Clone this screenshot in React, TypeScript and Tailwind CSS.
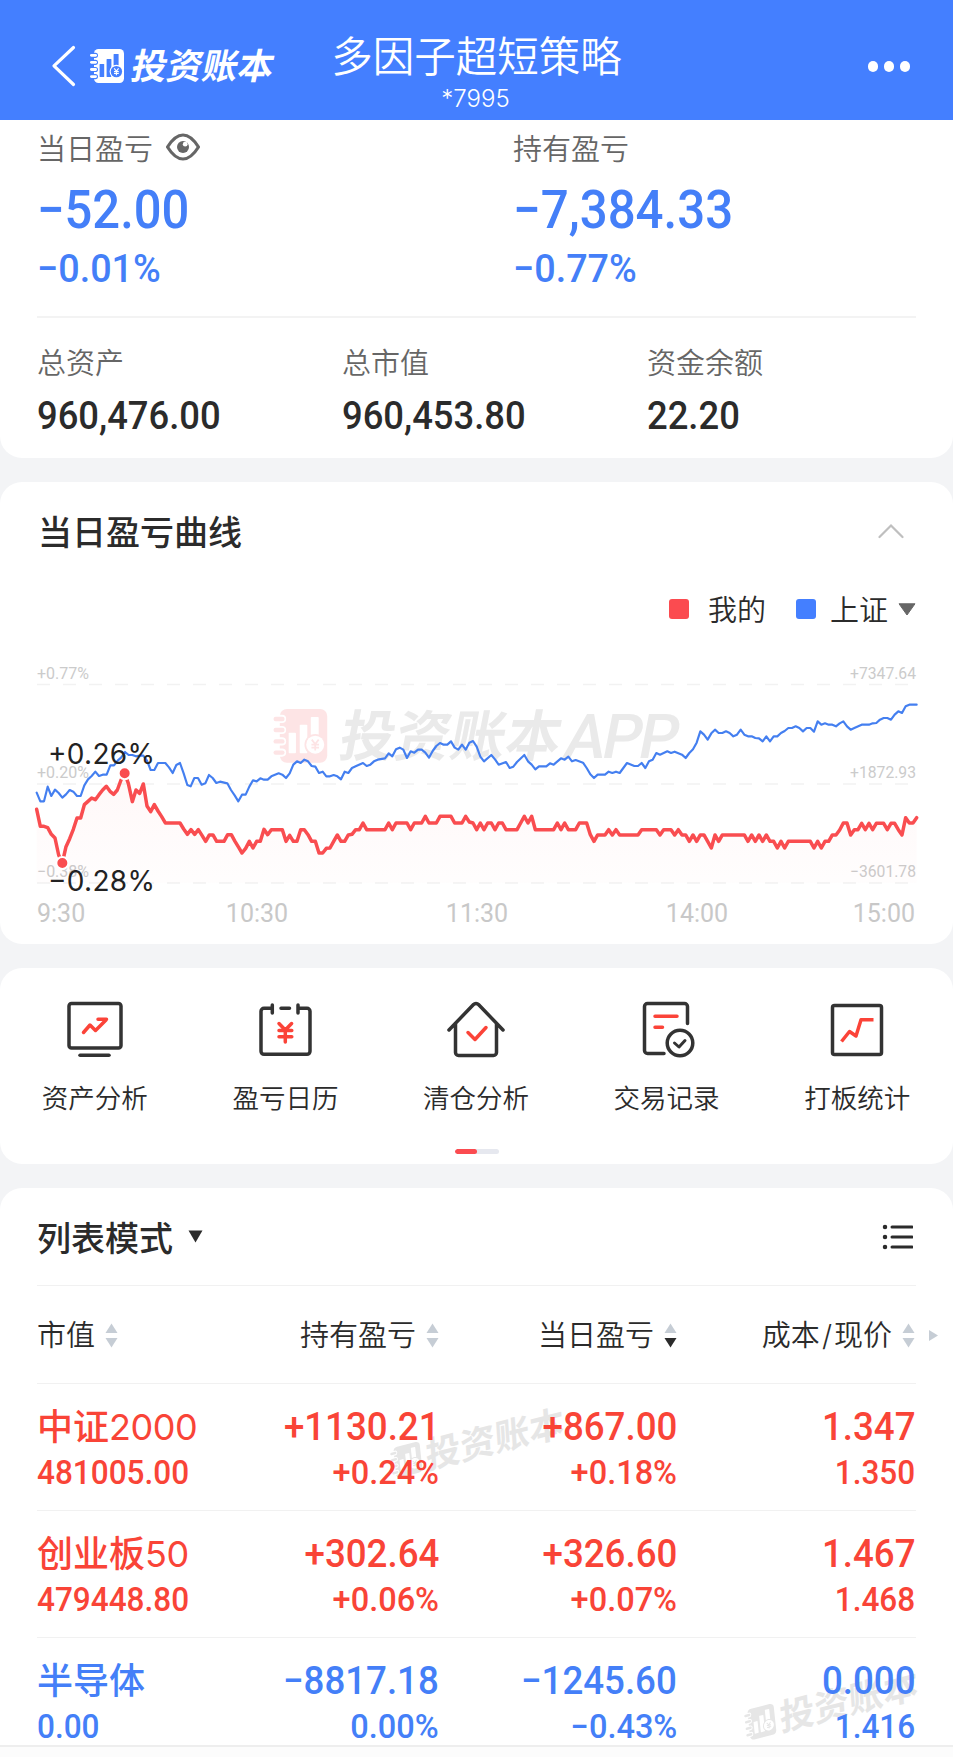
import type { ReactNode } from "react";

type Tone = "up" | "down";

type Holding = {
  name: string;
  code?: string;
  tone: Tone;
  marketValue: string;
  held: [string, string];
  today: [string, string];
  price: [string, string];
};

const TONE: Record<Tone, string> = {
  up: "text-[#f94437]",
  down: "text-[#447ff8]",
};

const HOLDINGS: Holding[] = [
  {
    name: "中证",
    code: "2000",
    tone: "up",
    marketValue: "481005.00",
    held: ["+1130.21", "+0.24%"],
    today: ["+867.00", "+0.18%"],
    price: ["1.347", "1.350"],
  },
  {
    name: "创业板",
    code: "50",
    tone: "up",
    marketValue: "479448.80",
    held: ["+302.64", "+0.06%"],
    today: ["+326.60", "+0.07%"],
    price: ["1.467", "1.468"],
  },
  {
    name: "半导体",
    tone: "down",
    marketValue: "0.00",
    held: ["−8817.18", "0.00%"],
    today: ["−1245.60", "−0.43%"],
    price: ["0.000", "1.416"],
  },
];

// Both series are in thirds of a pixel, one minute = 11 units on x.
const INDEX_LINE =
  "110,458 121,484 132,484 143,440 154,468 165,449 176,459 187,473 198,463 209,450 220,455 231,468 242,468 253,436 264,418 275,408 286,395 297,408 308,404 320,404 331,376 342,376 353,362 364,352 375,336 386,345 397,345 408,349 419,347 430,347 441,362 452,390 463,390 474,369 496,369 507,382 518,399 529,375 540,369 551,400 562,435 572,439 583,414 594,414 605,434 616,430 627,405 638,414 649,429 660,425 682,430 693,450 704,466 715,484 726,464 737,464 748,440 759,421 770,424 781,415 792,419 803,419 814,409 836,400 847,404 858,414 869,400 880,374 891,364 902,369 913,359 924,364 935,378 946,380 957,399 968,395 979,409 990,409 1001,405 1012,409 1023,418 1034,395 1045,399 1056,384 1067,379 1089,369 1100,378 1111,374 1122,364 1133,359 1155,355 1166,340 1177,349 1188,328 1199,323 1210,329 1221,354 1232,334 1243,338 1254,329 1265,329 1276,338 1287,353 1298,333 1309,318 1320,309 1331,314 1342,314 1353,304 1364,323 1375,329 1386,314 1397,329 1408,308 1419,303 1430,320 1441,350 1452,364 1474,345 1485,358 1496,374 1518,366 1529,384 1540,380 1551,366 1573,345 1584,364 1595,374 1606,388 1617,379 1639,379 1650,370 1661,374 1683,355 1694,359 1705,350 1716,364 1727,360 1749,368 1760,384 1771,403 1782,414 1793,404 1815,404 1826,395 1837,399 1848,395 1859,399 1881,369 1903,378 1914,378 1925,369 1936,384 1947,364 1958,359 1969,339 1980,344 2002,334 2013,339 2024,335 2046,344 2057,354 2068,339 2079,328 2090,308 2101,274 2112,284 2123,299 2134,280 2145,269 2156,279 2167,279 2178,274 2189,279 2200,289 2211,284 2222,269 2233,284 2244,289 2255,289 2266,294 2277,295 2288,304 2299,289 2310,304 2321,289 2332,289 2343,279 2354,273 2365,264 2376,264 2387,259 2398,264 2409,274 2420,264 2431,264 2442,275 2453,244 2464,254 2475,250 2486,254 2497,254 2508,259 2519,250 2530,244 2541,259 2552,269 2563,264 2585,254 2607,254 2618,250 2629,249 2640,239 2651,234 2662,234 2673,239 2684,224 2695,214 2706,219 2717,199 2728,194 2750,194";

const MY_LINE =
  "110,508 121,559 132,559 143,563 154,583 165,594 176,645 187,669 198,620 209,596 220,568 231,534 242,534 253,494 264,484 275,474 286,479 297,464 308,450 319,439 330,454 341,463 352,450 363,420 374,400 385,430 397,485 408,450 419,460 430,432 441,498 452,515 463,494 474,513 485,530 496,549 540,549 551,567 562,583 573,569 584,583 595,569 606,586 617,604 628,585 639,585 650,604 672,604 683,584 694,584 705,604 716,622 726,639 737,625 748,604 759,624 770,604 781,604 792,568 803,584 814,569 847,569 858,604 869,586 880,604 891,604 902,569 913,569 924,584 935,604 946,604 957,639 968,639 979,625 990,624 1001,604 1012,585 1023,604 1034,604 1045,585 1056,583 1067,569 1078,569 1089,549 1100,569 1155,569 1166,549 1177,569 1188,549 1221,549 1232,569 1243,549 1265,549 1276,529 1287,549 1309,549 1320,529 1353,529 1364,549 1386,549 1397,529 1408,546 1419,549 1430,569 1441,549 1452,569 1463,549 1474,549 1485,569 1496,549 1507,549 1518,569 1551,569 1562,549 1573,529 1584,549 1595,529 1606,569 1661,569 1672,549 1683,569 1694,549 1705,569 1727,569 1738,549 1760,549 1771,584 1782,604 1793,585 1815,585 1826,569 1837,585 1848,569 1859,585 1914,585 1925,569 1969,569 1980,585 1991,569 2013,569 2024,585 2035,569 2046,585 2057,585 2068,604 2079,585 2090,604 2101,585 2112,585 2123,604 2134,624 2145,585 2156,604 2167,585 2233,585 2244,604 2255,585 2266,604 2277,585 2288,604 2299,585 2310,604 2321,604 2332,624 2343,604 2354,624 2365,604 2431,604 2442,624 2453,604 2464,624 2475,604 2486,604 2497,585 2508,585 2519,570 2530,549 2541,549 2552,585 2563,569 2574,569 2585,550 2596,569 2607,550 2618,569 2629,550 2651,550 2662,569 2673,550 2684,550 2695,569 2706,585 2717,533 2728,549 2739,549 2750,533";

/** Narrowed Roboto, close to a DIN figure. */
function Num({ children, right = false, className = "" }: { children: ReactNode; right?: boolean; className?: string }) {
  return (
    <span
      className={[
        "inline-block whitespace-nowrap font-['Roboto'] font-medium leading-none",
        right ? "origin-right" : "origin-left",
        className,
      ].join(" ")}
    >
      {children}
    </span>
  );
}

/** Spiral notebook with bars and a coin. `hole` is the color behind the mark. */
function BookMark({ color, hole }: { color: string; hole: string }) {
  return (
    <g>
      <rect x="4" y="0" width="30" height="34" rx="4.5" fill={color} />
      {[6.3, 13.3, 20.5, 27.6].map((y) => (
        <g key={y}>
          <rect x="-1" y={y - 2.6} width="9" height="5.2" rx="2.6" fill={hole} />
          <rect x="0" y={y - 1.4} width="7" height="2.8" rx="1.4" fill={color} />
        </g>
      ))}
      <rect x="9.6" y="15" width="4.6" height="13" rx=".5" fill={hole} />
      <rect x="16.6" y="10" width="4.8" height="18" rx=".5" fill={hole} />
      <rect x="23.6" y="5" width="5" height="12" rx=".5" fill={hole} />
      <circle cx="26.4" cy="22.6" r="6.8" fill={color} />
      <circle cx="26.4" cy="22.6" r="5.7" fill={hole} />
      <path d="M24.2 19.4l2.2 2.8 2.2-2.8M26.4 22.2v4M24 22.6h4.8M24 24.5h4.8" fill="none" stroke={color} strokeWidth="1.1" />
    </g>
  );
}

function Sorter({ active = false }: { active?: boolean }) {
  return (
    <svg className="w-[13px] h-[25px] flex-none" viewBox="0 0 13 25">
      <path d="M6.5 0.5L12.5 10H.5z" fill="#c6cdd5" />
      <path d="M6.5 24.5L12.5 15H.5z" fill={active ? "#2b2b2b" : "#c6cdd5"} />
    </svg>
  );
}

function TableWatermark({ className }: { className: string }) {
  return (
    <svg className={`absolute w-[190px] h-[80px] overflow-visible ${className}`} viewBox="0 0 190 80">
      <g transform="translate(6 44) rotate(-14)">
        <g transform="translate(2 -1) skewX(-8) scale(.9)">
          <BookMark color="#e6e6e6" hole="#ffffff" />
        </g>
        <text x="38" y="28" transform="skewX(-10)" fontSize="35.5" fontWeight="700" fill="#e6e6e6" fontFamily="'Noto Sans CJK SC', sans-serif">
          投资账本
        </text>
      </g>
    </svg>
  );
}

function Header() {
  return (
    <header className="relative h-[120px] bg-[#447fff] text-white">
      <div className="absolute left-[50px] top-[44px] flex items-center">
        <svg className="w-[28px] h-[43px]" viewBox="0 0 28 43">
          <path d="M23.5 3.5L4 21.8l19.5 18.7" fill="none" stroke="#fff" strokeWidth="3.2" strokeLinecap="round" strokeLinejoin="round" />
        </svg>
        <svg className="ml-[12px] w-[190px] h-[43px] overflow-visible" viewBox="0 0 190 43">
          <g transform="translate(0 5)">
            <BookMark color="#ffffff" hole="#447fff" />
          </g>
          <text x="47" y="35" transform="skewX(-12)" fontSize="35.5" fontWeight="700" fill="#fff" fontFamily="'Noto Sans CJK SC', sans-serif">
            投资账本
          </text>
        </svg>
      </div>
      <div className="flex flex-col items-center pt-[34px] font-[350]">
        <h1 className="text-[41.5px] leading-[46px]">多因子超短策略</h1>
        <p className="mt-[7px] mr-[2px] text-[24px] leading-[24px] font-light">*7995</p>
      </div>
      <div className="absolute right-[43px] top-[61px] flex gap-[5.5px]">
        <i className="size-[10.5px] rounded-full bg-white" />
        <i className="size-[10.5px] rounded-full bg-white" />
        <i className="size-[10.5px] rounded-full bg-white" />
      </div>
    </header>
  );
}

function Summary() {
  const totals = [
    ["总资产", "960,476.00"],
    ["总市值", "960,453.80"],
    ["资金余额", "22.20"],
  ];
  return (
    <section className="h-[338px] rounded-b-[22px] bg-white px-[37px] pt-[9px]">
      <div className="grid grid-cols-[476px_1fr] text-[#447ff8]">
        <div>
          <div className="flex h-10 items-center gap-[12px] text-[29px] leading-none text-[#666]">
            <span>当日盈亏</span>
            <svg className="mb-[4px] w-[36px] h-[28px]" viewBox="0 0 36 28">
              <path d="M2.5 14Q10 2 18 2t15.500 12Q26 26 18 26T2.500 14z" fill="none" stroke="#666" strokeWidth="3.200" strokeLinejoin="round" />
              <circle cx="18" cy="14" r="6" fill="#666" />
              <circle cx="20.200" cy="11.200" r="2.400" fill="#fff" />
            </svg>
          </div>
          <div className="flex h-[82px] items-center">
            <Num className="text-[53.5px] scale-x-[.915]">−52.00</Num>
          </div>
          <div className="flex h-9 items-center">
            <Num className="text-[39.5px] scale-x-[.955]">−0.01%</Num>
          </div>
        </div>
        <div>
          <div className="flex h-10 items-center text-[29px] leading-none text-[#666]">持有盈亏</div>
          <div className="flex h-[82px] items-center">
            <Num className="text-[53.5px] scale-x-[.92]">−7,384.33</Num>
          </div>
          <div className="flex h-9 items-center">
            <Num className="text-[39.5px] scale-x-[.955]">−0.77%</Num>
          </div>
        </div>
      </div>
      <div className="mt-[29px] h-0.5 bg-[#f3f3f3]" />
      <div className="mt-[25px] grid grid-cols-[305px_305px_1fr]">
        {totals.map(([label, value]) => (
          <div key={label}>
            <div className="flex h-10 items-center text-[29px] leading-none text-[#666]">{label}</div>
            <div className="flex h-[66px] items-center text-[#2b2b2b]">
              <Num className="text-[38.5px] scale-x-[.945]">{value}</Num>
            </div>
          </div>
        ))}
      </div>
    </section>
  );
}

function Chart() {
  const scale = [
    { y: 44.5, left: "+0.77%", right: "+7347.64" },
    { y: 144, left: "+0.20%", right: "+1872.93" },
    { y: 243, left: "−0.38%", right: "−3601.78" },
  ];
  return (
    <svg className="mt-[5px] block h-[304px] w-[953px] font-normal" viewBox="0 0 953 304" fontFamily="Roboto, sans-serif">
      <defs>
        <linearGradient id="fade" x1="0" y1="0" x2="0" y2="1">
          <stop offset="0" stopColor="#fb4b50" stopOpacity=".04" />
          <stop offset="1" stopColor="#fb4b50" stopOpacity=".01" />
        </linearGradient>
      </defs>

      <g transform="translate(273.500 69) scale(1.580)">
        <BookMark color="#fde4e5" hole="#ffffff" />
      </g>
      <g transform="translate(337 116) skewX(-11)" fill="#eaeaea">
        <text fontSize="55" fontWeight="700" fontFamily="'Noto Sans CJK SC', sans-serif" textLength="221">
          投资账本
        </text>
        <text x="225" y="2" fontSize="62" fontWeight="500" fontFamily="Roboto" textLength="114">
          APP
        </text>
      </g>

      {scale.map((s) => (
        <g key={s.y} fontSize="16.500" fill="#cbcbcb">
          <line x1="37" x2="916" y1={s.y} y2={s.y} stroke="#f2f2f2" strokeWidth="1.500" strokeDasharray="13 13" />
          <text x="37" y={s.y - 6} textLength="52" lengthAdjust="spacingAndGlyphs">{s.left}</text>
          <text x="850" y={s.y - 6} textLength="66" lengthAdjust="spacingAndGlyphs">{s.right}</text>
        </g>
      ))}

      <g transform="scale(.33333)" fill="none" strokeLinejoin="round" strokeLinecap="round">
        <polygon points={`${MY_LINE} 2750,729 110,729`} fill="url(#fade)" />
        <polyline points={INDEX_LINE} stroke="#447ff0" strokeWidth="6.500" />
        <polyline points={MY_LINE} stroke="#f94d50" strokeWidth="10.500" />
        <circle cx="374" cy="400" r="18" fill="#f94d50" stroke="#fff" strokeWidth="6" />
        <circle cx="187" cy="669" r="18" fill="#f94d50" stroke="#fff" strokeWidth="6" />
      </g>

      <g fontSize="28" fill="#222" fontFamily="Inter, sans-serif">
        <text x="48" y="124" textLength="107">+0.26%</text>
        <text x="48" y="250.500" textLength="107">−0.28%</text>
      </g>

      <g fontSize="25" fill="#c8c8c8">
        <text x="37" y="282">9:30</text>
        <text x="257" y="282" textAnchor="middle">10:30</text>
        <text x="477" y="282" textAnchor="middle">11:30</text>
        <text x="697" y="282" textAnchor="middle">14:00</text>
        <text x="915" y="282" textAnchor="end">15:00</text>
      </g>
    </svg>
  );
}

function CurveCard() {
  return (
    <section className="mt-6 h-[462px] overflow-hidden rounded-[22px] bg-white pt-[25px]">
      <div className="flex h-[52px] items-center justify-between pl-[38px] pr-[49px]">
        <h2 className="text-[34px] leading-none font-medium">当日盈亏曲线</h2>
        <svg className="mb-[4px] w-[26px] h-[16px]" viewBox="0 0 26 16">
          <path d="M1.500 14L13 2.500 24.500 14" fill="none" stroke="#bfbfbf" strokeWidth="2.200" strokeLinecap="round" />
        </svg>
      </div>
      <div className="mt-[24px] flex h-[52px] items-center justify-end pr-[37px] text-[29px] leading-none">
        <i className="size-[20px] rounded-[3px] bg-[#fb4b50]" />
        <span className="ml-[19px] pt-[2px]">我的</span>
        <i className="ml-[30px] size-[20px] rounded-[3px] bg-[#447fff]" />
        <span className="ml-[14px] pt-[2px]">上证</span>
        <svg className="ml-[10px] w-[18px] h-[13px]" viewBox="0 0 18 13">
          <path d="M1 .8h16L9 12z" fill="#666" stroke="#666" strokeLinejoin="round" />
        </svg>
      </div>
      <Chart />
    </section>
  );
}

const SHORTCUTS: { label: string; icon: ReactNode }[] = [
  {
    label: "资产分析",
    icon: (
      <>
        <rect x="6" y="5.500" width="52" height="44.500" rx="2.500" />
        <path d="M17 57.300h29" />
        <path stroke="#fb4338" d="M20.500 34.500l6.500-7.500 5.500 5.500L43 22M35 21.300h8.500" />
      </>
    ),
  },
  {
    label: "盈亏日历",
    icon: (
      <>
        <path d="M19 10.300h-8a3 3 0 0 0-3 3v40a3 3 0 0 0 3 3h43a3 3 0 0 0 3-3v-40a3 3 0 0 0-3-3h-9M19.300 7v8M45 7v8M28 10.300h8.500" />
        <path stroke="#fb4338" d="M26 25.500l6.300 6.500 6.300-6.500M32.300 32v12M26 32.500h12.800M26 38.700h12.800" />
      </>
    ),
  },
  {
    label: "清仓分析",
    icon: (
      <>
        <path d="M5 32L29.500 6.500a3.500 3.500 0 0 1 5 0L59 32M11.500 26v28.500a3 3 0 0 0 3 3h35a3 3 0 0 0 3-3V26" />
        <path stroke="#fb4338" d="M24 34.500l7 7L42 29.500" />
      </>
    ),
  },
  {
    label: "交易记录",
    icon: (
      <>
        <path d="M52.500 25.500v-17a3 3 0 0 0-3-3H12.500a3 3 0 0 0-3 3v44a3 3 0 0 0 3 3H29" />
        <circle cx="45" cy="45" r="12.800" />
        <path strokeWidth="3" d="M39.500 45l4.500 4 6-6.500" />
        <path stroke="#fb4338" d="M20 18.200h22M20 29.200h7.500" />
      </>
    ),
  },
  {
    label: "打板统计",
    icon: (
      <>
        <rect x="7.500" y="7.500" width="49" height="49" rx="2" />
        <path stroke="#fb4338" strokeLinecap="butt" d="M16.500 43.500l8-10 6.500 4.500 5-16.300h12.500" />
      </>
    ),
  },
];

function Shortcuts() {
  return (
    <section className="mt-6 flex h-[196px] flex-col items-center rounded-[22px] bg-white pt-[30px]">
      <div className="grid w-full grid-cols-5">
        {SHORTCUTS.map((s) => (
          <div key={s.label} className="flex flex-col items-center">
            <svg
              className="size-[64px] -ml-px"
              viewBox="0 0 64 64"
              fill="none"
              stroke="#333"
              strokeWidth="3.500"
              strokeLinecap="round"
              strokeLinejoin="round"
            >
              {s.icon}
            </svg>
            <span className="mt-[16px] -ml-px flex h-[41px] items-center text-[26.5px] leading-none">{s.label}</span>
          </div>
        ))}
      </div>
      <div className="mt-[30px] h-[5px] w-[44px] overflow-hidden rounded-full bg-[#e6e8ef]">
        <div className="h-full w-1/2 rounded-full bg-[#fb4b50]" />
      </div>
    </section>
  );
}

function Cell({ values }: { values: [string, string] }) {
  const isPercent = values[1].endsWith("%");
  return (
    <div className="flex flex-col items-end">
      <div className="flex h-10 items-center">
        <Num right className="text-[39px] scale-x-[.94]">{values[0]}</Num>
      </div>
      <div className="flex h-[50px] items-center">
        <Num right className={isPercent ? "text-[33px] scale-x-[.985]" : "text-[33px] scale-x-[.955]"}>
          {values[1]}
        </Num>
      </div>
    </div>
  );
}

function Holdings() {
  const cols = "grid grid-cols-[221px_181px_238px_238px]";
  return (
    <section className="relative mt-6 h-[557px] overflow-hidden rounded-t-[22px] bg-white px-[37px]">
      <TableWatermark className="left-[382px] top-[218px]" />
      <TableWatermark className="left-[736px] top-[480px]" />

      <div className="relative flex h-[97px] items-center justify-between pr-[3px]">
        <h2 className="flex items-center gap-[15px] text-[34px] leading-none font-medium">
          <span className="pt-[4px]">列表模式</span>
          <svg className="w-[15px] h-[13px]" viewBox="0 0 15 13">
            <path d="M.5.500h14L7.500 12.500z" fill="#2b2b2b" />
          </svg>
        </h2>
        <svg className="w-[32px] h-[26px]" viewBox="0 0 32 26" stroke="#2b2b2b" strokeLinecap="round">
          <path strokeWidth="3" d="M11 3h20M11 13h20M11 23h20" />
          <path strokeWidth="4.500" d="M4 3h.01M4 13h.01M4 23h.01" />
        </svg>
      </div>

      <div className={`${cols} relative h-[98px] items-center border-t border-[#f1f1f1] pt-[2px] text-[29px] leading-none`}>
        <span className="flex items-center gap-[10px]">市值<Sorter /></span>
        <span className="flex items-center justify-end gap-[10px]">持有盈亏<Sorter /></span>
        <span className="flex items-center justify-end gap-[10px]">当日盈亏<Sorter active /></span>
        <span className="flex items-center justify-end gap-[10px]">
          <span>
            成本<span className="px-[2px]">/</span>现价
          </span>
          <Sorter />
        </span>
        <svg className="absolute -right-[22px] top-[44px] w-[9px] h-[11px]" viewBox="0 0 9 11">
          <path d="M0 0l9 5.500L0 11z" fill="#c6cdd5" />
        </svg>
      </div>

      {HOLDINGS.map((h) => (
        <div key={h.name} className={`${cols} relative h-[127px] border-t border-[#f1f1f1] pt-[23px] ${TONE[h.tone]}`}>
          <div>
            <div className="flex h-10 items-center text-[36px] leading-none whitespace-nowrap font-medium">
              {h.name}
              {h.code ? <span className="font-normal tracking-[-0.5px]">{h.code}</span> : null}
            </div>
            <div className="flex h-[50px] items-center">
              <Num className="text-[33px] scale-x-[.955]">{h.marketValue}</Num>
            </div>
          </div>
          <Cell values={h.held} />
          <Cell values={h.today} />
          <Cell values={h.price} />
        </div>
      ))}
    </section>
  );
}

export default function App() {
  return (
    <div className="h-[1757px] w-[953px] overflow-hidden bg-[#f3f4f6] font-['Inter','Noto_Sans_CJK_SC',sans-serif] font-[350] text-[#2b2b2b]">
      <Header />
      <Summary />
      <CurveCard />
      <Shortcuts />
      <Holdings />
      <div className="h-[12px] border-t-2 border-[#eeeeee] bg-[#fcfcfc]" />
    </div>
  );
}
